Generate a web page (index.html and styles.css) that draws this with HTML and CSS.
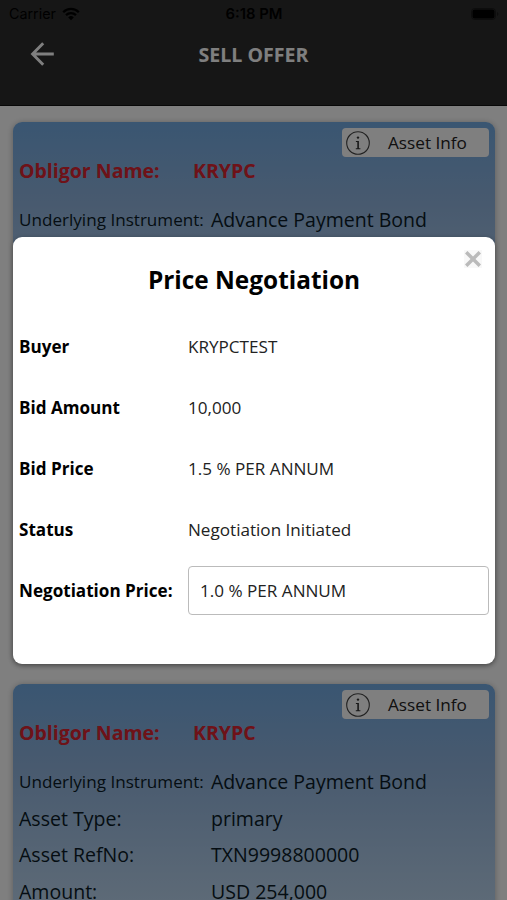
FILE: index.html
```html
<!doctype html>
<html lang="en">
	<head>
		<meta charset="utf-8">
		<title>Sell Offer</title>
		<link rel="stylesheet" href="styles.css">
	</head>
	<body>
		<header class="header">
			<div class="status-bar">
				<div class="carrier">
					<span>Carrier</span>
					<svg class="wifi" viewBox="0 0 18 14">
						<path d="M1.2 5.2a11 11 0 0 1 15.6 0M4 8.2a7.2 7.2 0 0 1 10 0" fill="none" stroke="#000" stroke-width="2.3"/>
						<path d="M9 13.3 6.2 10.4a4 4 0 0 1 5.6 0z"/>
					</svg>
				</div>
				<div class="time">6:18 PM</div>
				<svg class="battery" viewBox="0 0 28 12">
					<rect x=".5" y=".5" width="24" height="11" rx="3" fill="none" stroke="#000" stroke-opacity=".4"/>
					<rect x="1.5" y="1.5" width="22" height="9" rx="2"/>
					<path d="M26 4v4q1.5-.6 1.5-2T26 4" fill-opacity=".4"/>
				</svg>
			</div>
			<div class="nav-bar">
				<svg class="back" viewBox="0 0 24 24">
					<path d="M23.8 12H2.5M13.2 1.3 2.6 12l10.6 10.7" fill="none" stroke="#fff" stroke-width="2.9"/>
				</svg>
				<h1>SELL OFFER</h1>
			</div>
		</header>

		<main class="offers">
			<section class="card">
				<button class="asset-info">
					<svg viewBox="0 0 24 24">
						<circle cx="12" cy="12" r="11.3" fill="none" stroke="#444" stroke-width="1.1"/>
						<g fill="#333">
							<circle cx="12" cy="6.6" r="1.2"/>
							<path d="M9.9 9.9h3v7.3h1.5v1H9.8v-1h1.5v-6.3H9.9z"/>
						</g>
					</svg>
					<span>Asset Info</span>
				</button>
				<div class="obligor"><span>Obligor Name:</span><span>KRYPC</span></div>
				<dl>
					<dt class="small">Underlying Instrument:</dt><dd>Advance Payment Bond</dd>
				</dl>
			</section>
			<section class="card">
				<button class="asset-info">
					<svg viewBox="0 0 24 24">
						<circle cx="12" cy="12" r="11.3" fill="none" stroke="#444" stroke-width="1.1"/>
						<g fill="#333">
							<circle cx="12" cy="6.6" r="1.2"/>
							<path d="M9.9 9.9h3v7.3h1.5v1H9.8v-1h1.5v-6.3H9.9z"/>
						</g>
					</svg>
					<span>Asset Info</span>
				</button>
				<div class="obligor"><span>Obligor Name:</span><span>KRYPC</span></div>
				<dl>
					<dt class="small">Underlying Instrument:</dt><dd>Advance Payment Bond</dd>
					<dt>Asset Type:</dt><dd>primary</dd>
					<dt>Asset RefNo:</dt><dd>TXN9998800000</dd>
					<dt>Amount:</dt><dd>USD 254,000</dd>
				</dl>
			</section>
		</main>

		<div class="overlay">
			<div class="modal">
				<button class="close">
					<svg viewBox="0 0 16 16">
						<path d="M1.2 1.2l13.6 13.6M14.8 1.2L1.2 14.8" stroke="#bababa" stroke-width="3.5"/>
					</svg>
				</button>
				<h2>Price Negotiation</h2>
				<div class="row"><label>Buyer</label><span>KRYPCTEST</span></div>
				<div class="row"><label>Bid Amount</label><span>10,000</span></div>
				<div class="row"><label>Bid Price</label><span>1.5 % PER ANNUM</span></div>
				<div class="row"><label>Status</label><span>Negotiation Initiated</span></div>
				<div class="row">
					<label for="price">Negotiation Price:</label>
					<input type="text" id="price" value="1.0 % PER ANNUM">
				</div>
			</div>
		</div>
	</body>
</html>
```
FILE: styles.css
```css
* {
	box-sizing: border-box;
	font-family: "Open Sans", "Noto Sans", sans-serif;
}

body {
	margin: 0;
	height: 900px;
	overflow: hidden;
	background: #fff;
}

h1, h2, dl, dd {
	margin: 0;
}

button {
	border: 0;
	padding: 0;
}

.header {
	height: 106px;
	background: #2d2d2d;
	border-bottom: 1px solid #111;
}

.status-bar {
	display: grid;
	grid-template-columns: 1fr auto 1fr;
	align-items: center;
	height: 27px;
	padding: 0 8px 0 9px;
}

.status-bar span, .time {
	font-family: Inter, "Liberation Sans", sans-serif;
	font-size: 14.3px;
}

.carrier {
	display: flex;
	align-items: center;
	gap: 6px;
}

.wifi {
	width: 18px;
	height: 14px;
}

.status-bar .time {
	font-size: 14.8px;
	font-weight: 600;
}

.battery {
	width: 28px;
	height: 12px;
	justify-self: end;
}

.nav-bar {
	display: grid;
	grid-template-columns: 54px 1fr 54px;
	align-items: center;
	height: 54px;
}

.back {
	width: 24px;
	height: 24px;
	justify-self: end;
}

h1 {
	padding-top: 1px;
	color: #fff;
	font-size: 19.6px;
	font-weight: 700;
	text-align: center;
}

.offers {
	display: flex;
	flex-direction: column;
	height: 794px;
	gap: 20px;
	padding: 16px 12px 0 13px;
	overflow: hidden;
}

.card {
	flex: none;
	height: 542px;
	padding: 6px;
	border-radius: 9px;
	background: linear-gradient(#74ace4, #90b4de 80px, #bad4ee 216px, #fff);
	box-shadow: 0 1px 6px rgba(0, 0, 0, .3);
}

.asset-info {
	display: flex;
	align-items: center;
	width: 147px;
	height: 29px;
	margin-left: auto;
	padding-left: 4px;
	gap: 18px;
	border-radius: 4px;
	background: #fff;
	font-size: 17.2px;
	color: #222;
}

.asset-info svg {
	width: 24px;
	height: 24px;
}

.obligor {
	display: grid;
	grid-template-columns: 174px 1fr;
	height: 28px;
	line-height: 28px;
	font-size: 19.5px;
	font-weight: 700;
	color: #dc2430;
}

dl {
	display: grid;
	grid-template-columns: 192px 1fr;
	grid-auto-rows: 36.8px;
	align-items: center;
	margin-top: 16px;
	font-size: 19.55px;
	color: #0a1a26;
	white-space: nowrap;
}

.small {
	font-size: 17.1px;
}

/* dimmed page behind the dialog */
.overlay {
	position: absolute;
	top: 0;
	left: 0;
	width: 100%;
	height: 900px;
	display: flex;
	align-items: center;
	padding: 1px 12px 0 13px;
	background: rgba(0, 0, 0, .5);
}

.modal {
	position: relative;
	width: 100%;
	height: 427px;
	padding: 22px 6px 0;
	border-radius: 9px;
	background: #fff;
	box-shadow: 0 1px 5px rgba(0, 0, 0, .3);
}

.close {
	position: absolute;
	top: 13px;
	right: 13px;
	width: 18px;
	height: 18px;
	background: #f8f8f8;
}

.close svg {
	display: block;
	width: 18px;
	height: 18px;
	padding: 1px;
}

h2 {
	height: 42px;
	line-height: 42px;
	margin-bottom: 15.4px;
	font-size: 24.4px;
	text-align: center;
}

.row {
	display: grid;
	grid-template-columns: 169px 1fr;
	align-items: center;
	height: 61px;
	font-size: 17.1px;
	white-space: nowrap;
}

.row label {
	font-weight: 700;
}

.row span, .row input {
	color: #222;
}

.row input {
	width: 100%;
	height: 49px;
	padding: 0 11px;
	border: 1.5px solid #bbb;
	border-radius: 4px;
	font-size: 17.1px;
}
```
